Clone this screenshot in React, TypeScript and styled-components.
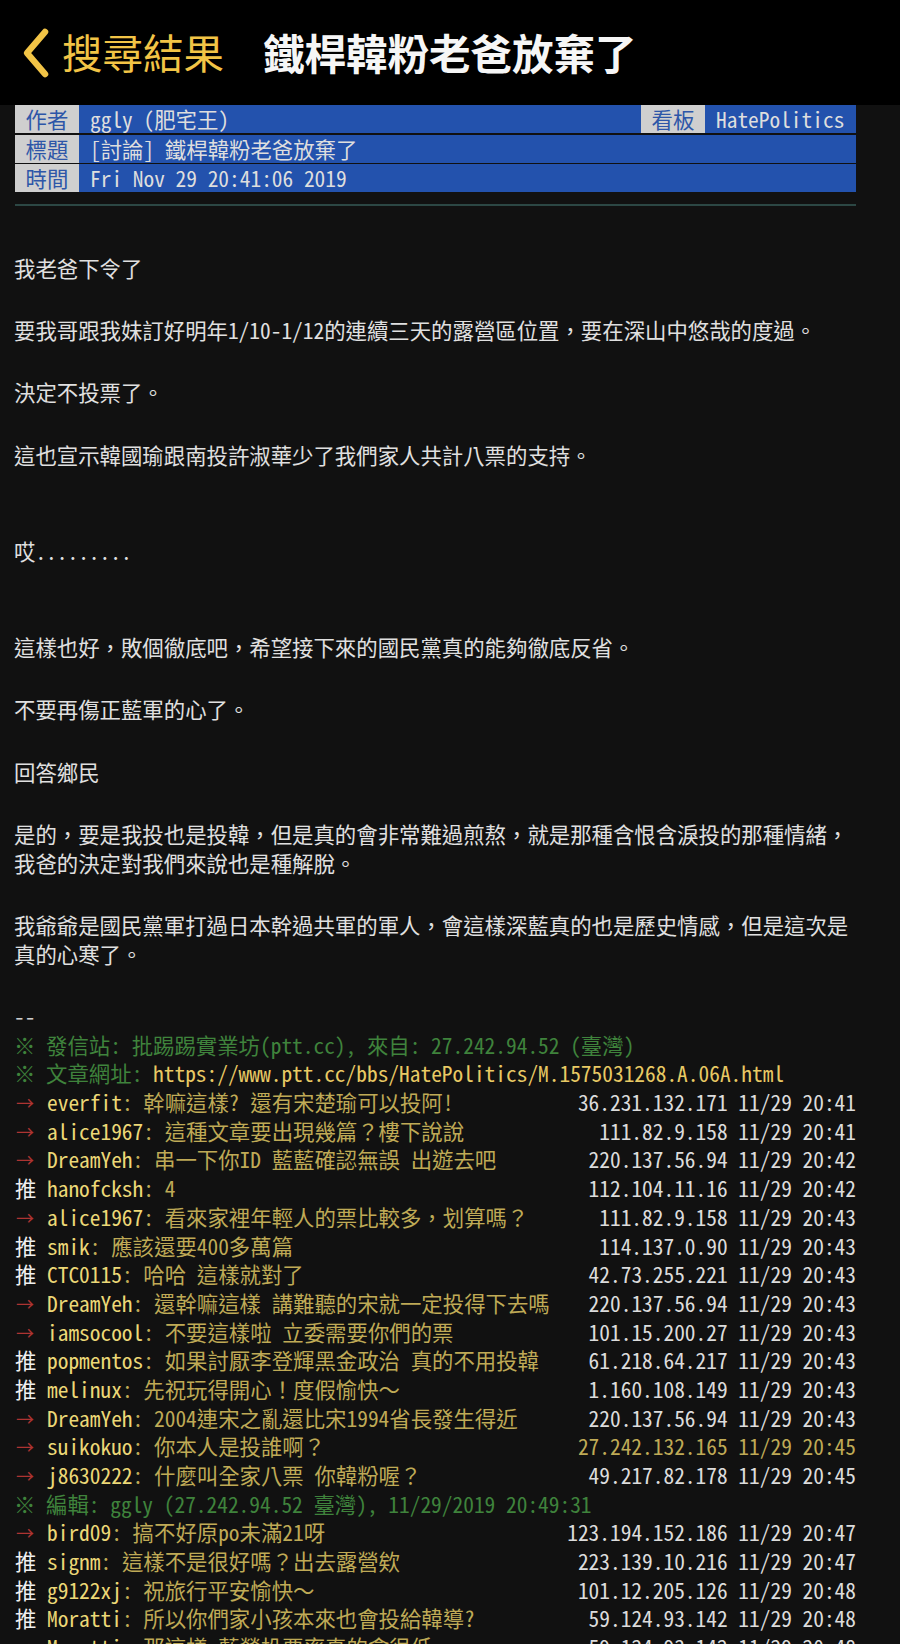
import React from 'react';
import styled, { createGlobalStyle } from 'styled-components';

const GlobalStyle = createGlobalStyle`
  html, body {
    margin: 0;
    padding: 0;
    background: #111111;
  }
`;

const MONO = `"Noto Sans Mono CJK TC", "Noto Sans CJK TC", "DejaVu Sans Mono", monospace`;
const SANS = `"Noto Sans CJK TC", "Noto Sans", sans-serif`;

const Page = styled.div`
  width: 900px;
  height: 1644px;
  overflow: hidden;
  background: #111111;
  font-family: ${MONO};
  font-size: 21.4px;
`;

const TopBar = styled.header`
  height: 105px;
  background: #000;
  display: flex;
  align-items: center;
  padding-left: 20px;
  box-sizing: border-box;
`;

const BackIcon = styled.svg`
  width: 32px;
  height: 52px;
  flex-shrink: 0;
`;

const BackLabel = styled.span`
  font-family: ${SANS};
  font-size: 40.5px;
  color: #f2c446;
  margin-left: 10px;
  line-height: 1;
`;

const Title = styled.h1`
  font-family: ${SANS};
  font-size: 41.5px;
  font-weight: 700;
  color: #f6f6f6;
  margin: 0 0 0 39px;
  line-height: 1;
`;

const Content = styled.main`
  padding: 0 44px 0 14px;
`;

const MetaTable = styled.div`
  display: flex;
  flex-direction: column;
  gap: 1.5px;
  margin-left: 1px;
`;

const MetaRow = styled.div`
  display: flex;
  height: 28px;
  line-height: 28px;
`;

const MetaLabel = styled.span`
  width: 64px;
  flex-shrink: 0;
  background: #cfcfcf;
  color: #2d56a8;
  text-align: center;
`;

const MetaValue = styled.span<{ $width?: number }>`
  flex: ${(p) => (p.$width ? `0 0 ${p.$width}px` : 1)};
  box-sizing: border-box;
  background: #2352ad;
  color: #dedede;
  padding: 0 11px;
  white-space: pre;
`;

const Divider = styled.div`
  height: 2px;
  background: #2c4744;
  margin: 12px 0 0 1px;
`;

const Body = styled.section`
  padding-top: 47.5px;
`;

const TextLine = styled.div<{ $tone?: string }>`
  line-height: 28.7px;
  height: 28.7px;
  color: ${(p) => p.$tone || '#e0e0e0'};
  white-space: pre;
`;

const BlankLine = styled.div`
  height: 33.7px;
`;

const Link = styled.span`
  color: #e8c964;
`;

const PushRow = styled.div`
  display: flex;
  justify-content: space-between;
  line-height: 28.7px;
  height: 28.7px;
  white-space: pre;
`;

const PushLeft = styled.span`
  display: flex;
  margin-left: 1px;
`;

const PushTag = styled.span<{ $kind: string }>`
  display: inline-block;
  width: 32px;
  flex-shrink: 0;
  color: ${(p) => (p.$kind === '推' ? '#f0f0f0' : '#ad3432')};
  font-size: ${(p) => (p.$kind === '推' ? '21.4px' : '18px')};
  padding-left: ${(p) => (p.$kind === '推' ? '0' : '1px')};
  box-sizing: border-box;
`;

const PushUser = styled.span`
  color: #ecd877;
`;

const PushText = styled.span`
  color: #bfaa56;
`;

const PushMeta = styled.span<{ $olive?: boolean }>`
  color: ${(p) => (p.$olive ? '#bfaa56' : '#dcdcdc')};
`;

const GREEN = '#3f833c';

type Row =
  | { kind: 'push'; tag: '推' | '→'; user: string; text: string; ip: string; time: string; olive?: boolean }
  | { kind: 'note'; text: string };

const bodyLines: (string | null)[] = [
  '我老爸下令了',
  null,
  '要我哥跟我妹訂好明年1/10-1/12的連續三天的露營區位置，要在深山中悠哉的度過。',
  null,
  '決定不投票了。',
  null,
  '這也宣示韓國瑜跟南投許淑華少了我們家人共計八票的支持。',
  null,
  null,
  '哎.........',
  null,
  null,
  '這樣也好，敗個徹底吧，希望接下來的國民黨真的能夠徹底反省。',
  null,
  '不要再傷正藍軍的心了。',
  null,
  '回答鄉民',
  null,
  '是的，要是我投也是投韓，但是真的會非常難過煎熬，就是那種含恨含淚投的那種情緒，',
  '我爸的決定對我們來說也是種解脫。',
  null,
  '我爺爺是國民黨軍打過日本幹過共軍的軍人，會這樣深藍真的也是歷史情感，但是這次是',
  '真的心寒了。',
  null,
];

const rows: Row[] = [
  { kind: 'push', tag: '→', user: 'everfit', text: '幹嘛這樣? 還有宋楚瑜可以投阿!', ip: '36.231.132.171', time: '11/29 20:41' },
  { kind: 'push', tag: '→', user: 'alice1967', text: '這種文章要出現幾篇？樓下說說', ip: '111.82.9.158', time: '11/29 20:41' },
  { kind: 'push', tag: '→', user: 'DreamYeh', text: '串一下你ID 藍藍確認無誤 出遊去吧', ip: '220.137.56.94', time: '11/29 20:42' },
  { kind: 'push', tag: '推', user: 'hanofcksh', text: '4', ip: '112.104.11.16', time: '11/29 20:42' },
  { kind: 'push', tag: '→', user: 'alice1967', text: '看來家裡年輕人的票比較多，划算嗎？', ip: '111.82.9.158', time: '11/29 20:43' },
  { kind: 'push', tag: '推', user: 'smik', text: '應該還要400多萬篇', ip: '114.137.0.90', time: '11/29 20:43' },
  { kind: 'push', tag: '推', user: 'CTC0115', text: '哈哈 這樣就對了', ip: '42.73.255.221', time: '11/29 20:43' },
  { kind: 'push', tag: '→', user: 'DreamYeh', text: '還幹嘛這樣 講難聽的宋就一定投得下去嗎', ip: '220.137.56.94', time: '11/29 20:43' },
  { kind: 'push', tag: '→', user: 'iamsocool', text: '不要這樣啦 立委需要你們的票', ip: '101.15.200.27', time: '11/29 20:43' },
  { kind: 'push', tag: '推', user: 'popmentos', text: '如果討厭李登輝黑金政治 真的不用投韓', ip: '61.218.64.217', time: '11/29 20:43' },
  { kind: 'push', tag: '推', user: 'melinux', text: '先祝玩得開心！度假愉快～', ip: '1.160.108.149', time: '11/29 20:43' },
  { kind: 'push', tag: '→', user: 'DreamYeh', text: '2004連宋之亂還比宋1994省長發生得近', ip: '220.137.56.94', time: '11/29 20:43' },
  { kind: 'push', tag: '→', user: 'suikokuo', text: '你本人是投誰啊？', ip: '27.242.132.165', time: '11/29 20:45', olive: true },
  { kind: 'push', tag: '→', user: 'j8630222', text: '什麼叫全家八票 你韓粉喔？', ip: '49.217.82.178', time: '11/29 20:45' },
  { kind: 'note', text: '※ 編輯: ggly (27.242.94.52 臺灣), 11/29/2019 20:49:31' },
  { kind: 'push', tag: '→', user: 'bird09', text: '搞不好原po未滿21呀', ip: '123.194.152.186', time: '11/29 20:47' },
  { kind: 'push', tag: '推', user: 'signm', text: '這樣不是很好嗎？出去露營欸', ip: '223.139.10.216', time: '11/29 20:47' },
  { kind: 'push', tag: '推', user: 'g9122xj', text: '祝旅行平安愉快～', ip: '101.12.205.126', time: '11/29 20:48' },
  { kind: 'push', tag: '推', user: 'Moratti', text: '所以你們家小孩本來也會投給韓導?', ip: '59.124.93.142', time: '11/29 20:48' },
  { kind: 'push', tag: '→', user: 'Moratti', text: '那這樣 藍營投票率真的會很低', ip: '59.124.93.142', time: '11/29 20:48' },
];

export default function App() {
  return (
    <Page>
      <GlobalStyle />
      <TopBar>
        <BackIcon viewBox="0 0 32 52">
          <polyline
            points="25,5 7,26 25,47"
            fill="none"
            stroke="#f2c446"
            strokeWidth="6.5"
            strokeLinecap="round"
            strokeLinejoin="round"
          />
        </BackIcon>
        <BackLabel>搜尋結果</BackLabel>
        <Title>鐵桿韓粉老爸放棄了</Title>
      </TopBar>

      <Content>
        <MetaTable>
          <MetaRow>
            <MetaLabel>作者</MetaLabel>
            <MetaValue>ggly (肥宅王)</MetaValue>
            <MetaLabel>看板</MetaLabel>
            <MetaValue $width={151}>HatePolitics</MetaValue>
          </MetaRow>
          <MetaRow>
            <MetaLabel>標題</MetaLabel>
            <MetaValue>[討論] 鐵桿韓粉老爸放棄了</MetaValue>
          </MetaRow>
          <MetaRow>
            <MetaLabel>時間</MetaLabel>
            <MetaValue>Fri Nov 29 20:41:06 2019</MetaValue>
          </MetaRow>
        </MetaTable>
        <Divider />

        <Body>
          {bodyLines.map((line, i) =>
            line === null ? <BlankLine key={i} /> : <TextLine key={i}>{line}</TextLine>
          )}
          <TextLine $tone="#cfcfcf">--</TextLine>
          <TextLine $tone={GREEN}>※ 發信站: 批踢踢實業坊(ptt.cc), 來自: 27.242.94.52 (臺灣)</TextLine>
          <TextLine $tone={GREEN}>
            ※ 文章網址: <Link>https://www.ptt.cc/bbs/HatePolitics/M.1575031268.A.06A.html</Link>
          </TextLine>

          {rows.map((row, i) =>
            row.kind === 'note' ? (
              <TextLine key={i} $tone={GREEN}>{row.text}</TextLine>
            ) : (
              <PushRow key={i}>
                <PushLeft>
                  <PushTag $kind={row.tag}>{row.tag}</PushTag>
                  <PushUser>{row.user}</PushUser>
                  <PushText>: {row.text}</PushText>
                </PushLeft>
                <PushMeta $olive={row.olive}>
                  {row.ip} {row.time}
                </PushMeta>
              </PushRow>
            )
          )}
        </Body>
      </Content>
    </Page>
  );
}
